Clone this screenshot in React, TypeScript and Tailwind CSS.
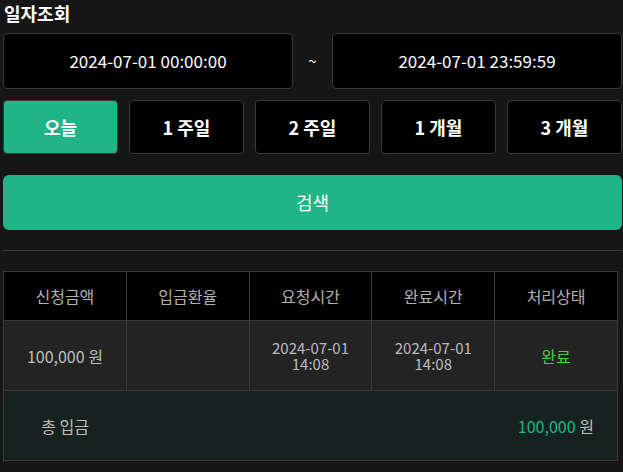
import React from "react";

const font = { fontFamily: '"Noto Sans CJK KR", "Noto Sans", sans-serif' };

export default function App() {
  const periods = ["오늘", "1 주일", "2 주일", "1 개월", "3 개월"];
  const heads = ["신청금액", "입금환율", "요청시간", "완료시간", "처리상태"];
  return (
    <div className="min-h-[472px] w-[623px] bg-[#161616] pl-[3px] pr-[1px]" style={font}>
      <div className="h-[33px] pl-[1px] text-[18px] font-bold leading-[26px] text-white">일자조회</div>
      <div className="flex h-[56px] items-center">
        <div className="flex h-full w-[290px] items-center justify-center rounded-[4px] border border-[#3a3a3a] bg-black text-[17px] text-white">
          2024-07-01 00:00:00
        </div>
        <div className="flex w-[39px] justify-center text-[15px] text-white">~</div>
        <div className="flex h-full w-[290px] items-center justify-center rounded-[4px] border border-[#3a3a3a] bg-black text-[17px] text-white">
          2024-07-01 23:59:59
        </div>
      </div>
      <div className="mt-[11px] grid h-[54px] grid-cols-5 gap-[11px]">
        {periods.map((p, i) => (
          <div
            key={p}
            className={
              i === 0
                ? "flex items-center justify-center rounded-[4px] border border-[#3a3a3a] bg-[#20b486] text-[18px] font-bold text-white"
                : "flex items-center justify-center rounded-[4px] border border-[#3a3a3a] bg-black text-[18px] font-bold text-white"
            }
          >
            {p}
          </div>
        ))}
      </div>
      <div className="mt-[21px] flex h-[55px] items-center justify-center rounded-[6px] bg-[#20b486] text-[18px] text-white">
        검색
      </div>
      <div className="mt-[20px] h-px bg-[#3a3a3a]" />
      <table className="mt-[20px] w-[615px] table-fixed border-collapse border border-[#3a3a3a] text-center text-[16px]">
        <thead>
          <tr className="h-[49px] bg-black text-[#b0b0b0]">
            {heads.map((h) => (
              <th key={h} className="border border-[#3a3a3a] font-normal">
                {h}
              </th>
            ))}
          </tr>
        </thead>
        <tbody>
          <tr className="h-[70px] bg-[#232323] text-[#bdbdbd]">
            <td className="border border-[#3a3a3a]">100,000 원</td>
            <td className="border border-[#3a3a3a]"></td>
            <td className="border border-[#3a3a3a] text-[15px]">
              <div className="leading-[16px]">2024-07-01</div>
              <div className="leading-[16px]">14:08</div>
            </td>
            <td className="border border-[#3a3a3a] text-[15px]">
              <div className="leading-[16px]">2024-07-01</div>
              <div className="leading-[16px]">14:08</div>
            </td>
            <td className="border border-[#3a3a3a] text-[#3fd13f]">완료</td>
          </tr>
          <tr className="h-[70px] bg-[#162220] text-[#bdbdbd]">
            <td>총 입금</td>
            <td></td>
            <td></td>
            <td></td>
            <td>
              <span className="text-[#20b486]">100,000</span> 원
            </td>
          </tr>
        </tbody>
      </table>
    </div>
  );
}
